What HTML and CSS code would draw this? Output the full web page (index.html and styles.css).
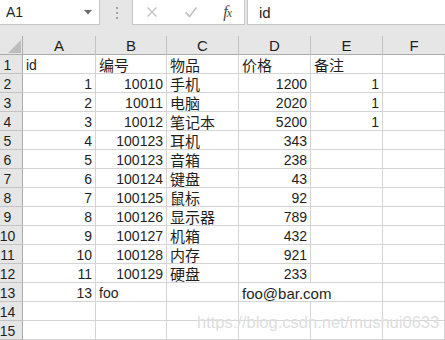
FILE: index.html
```html
<!DOCTYPE html>
<html lang="zh">
<head>
    <meta charset="UTF-8">
    <title>Sheet1</title>
    <link rel="stylesheet" href="styles.css">
</head>
<body>

    <!-- Barre de formule -->
    <div class="toolbar">
        <div class="namebox">
            <span>A1</span>
            <svg class="caret" width="8" height="5" viewBox="0 0 8 5"><path d="M0 0H8L4 4.5Z" fill="#6d6d6d"/></svg>
        </div>
        <div class="grip"><i></i><i></i><i></i></div>
        <div class="fx-buttons">
            <svg width="12" height="12" viewBox="0 0 12 12"><path d="M1.5 1.5L10.5 10.5M10.5 1.5L1.5 10.5" stroke="#c4c4c4" stroke-width="1.4"/></svg>
            <svg width="14" height="12" viewBox="0 0 14 12"><path d="M1.5 6.5L5.5 10.5L12.5 1.5" stroke="#c4c4c4" stroke-width="1.8" fill="none"/></svg>
            <span class="fx">f<small>x</small></span>
        </div>
        <div class="formula">id</div>
    </div>

    <!-- Feuille -->
    <div class="sheet">
        <div class="corner"><svg width="13" height="13" viewBox="0 0 13 13"><path d="M13 0V13H0Z" fill="#bcbcbc"/></svg></div>
        <div class="ch">A</div><div class="ch">B</div><div class="ch">C</div><div class="ch">D</div><div class="ch">E</div><div class="ch last">F</div>

        <div class="rh">1</div><div class="c">id</div><div class="c zh">编号</div><div class="c zh">物品</div><div class="c zh">价格</div><div class="c zh">备注</div><div class="c"></div>
        <div class="rh">2</div><div class="c n">1</div><div class="c n">10010</div><div class="c zh">手机</div><div class="c n">1200</div><div class="c n">1</div><div class="c"></div>
        <div class="rh">3</div><div class="c n">2</div><div class="c n">10011</div><div class="c zh">电脑</div><div class="c n">2020</div><div class="c n">1</div><div class="c"></div>
        <div class="rh">4</div><div class="c n">3</div><div class="c n">10012</div><div class="c zh">笔记本</div><div class="c n">5200</div><div class="c n">1</div><div class="c"></div>
        <div class="rh">5</div><div class="c n">4</div><div class="c n">100123</div><div class="c zh">耳机</div><div class="c n">343</div><div class="c"></div><div class="c"></div>
        <div class="rh">6</div><div class="c n">5</div><div class="c n">100123</div><div class="c zh">音箱</div><div class="c n">238</div><div class="c"></div><div class="c"></div>
        <div class="rh">7</div><div class="c n">6</div><div class="c n">100124</div><div class="c zh">键盘</div><div class="c n">43</div><div class="c"></div><div class="c"></div>
        <div class="rh">8</div><div class="c n">7</div><div class="c n">100125</div><div class="c zh">鼠标</div><div class="c n">92</div><div class="c"></div><div class="c"></div>
        <div class="rh">9</div><div class="c n">8</div><div class="c n">100126</div><div class="c zh">显示器</div><div class="c n">789</div><div class="c"></div><div class="c"></div>
        <div class="rh">10</div><div class="c n">9</div><div class="c n">100127</div><div class="c zh">机箱</div><div class="c n">432</div><div class="c"></div><div class="c"></div>
        <div class="rh">11</div><div class="c n">10</div><div class="c n">100128</div><div class="c zh">内存</div><div class="c n">921</div><div class="c"></div><div class="c"></div>
        <div class="rh">12</div><div class="c n">11</div><div class="c n">100129</div><div class="c zh">硬盘</div><div class="c n">233</div><div class="c"></div><div class="c"></div>
        <div class="rh">13</div><div class="c n">13</div><div class="c">foo</div><div class="c"></div><div class="c spill">foo@bar.com</div><div class="c"></div><div class="c"></div>
        <div class="rh">14</div><div class="c"></div><div class="c"></div><div class="c"></div><div class="c"></div><div class="c"></div><div class="c"></div>
        <div class="rh">15</div><div class="c"></div><div class="c"></div><div class="c"></div><div class="c"></div><div class="c"></div><div class="c"></div>
    </div>

    <div class="watermark">https://blog.csdn.net/mushui0633</div>

</body>
</html>
```

FILE: styles.css
```css
/* Page */
body {
    margin: 0;
    width: 445px;
    height: 340px;
    overflow: hidden;
    background-color: #e6e6e6;
    font-family: 'Liberation Sans', 'Noto Sans CJK SC', sans-serif;
    color: #1e1e1e;
    position: relative;
}

/* Barre de formule */
.toolbar {
    display: flex;
    height: 25px;
    gap: 2px;
}

.namebox {
    width: 100px;
    box-sizing: border-box;
    background-color: white;
    border-right: 1px solid #c6c6c6;
    border-bottom: 1px solid #c6c6c6;
    display: flex;
    align-items: center;
    justify-content: space-between;
    padding: 0 7px 0 6px;
    font-size: 14px;
}

.caret {
    margin-top: 1px;
}

.grip {
    width: 27px;
    display: flex;
    flex-direction: column;
    align-items: center;
    justify-content: center;
    gap: 3px;
    margin-left: 1px;
}

.grip i {
    width: 2px;
    height: 2px;
    background-color: #a3a3a3;
}

.fx-buttons {
    width: 113px;
    box-sizing: border-box;
    background-color: white;
    border: 1px solid #c6c6c6;
    border-top: none;
    display: flex;
    align-items: center;
    padding: 0 13px 0 13px;
    justify-content: space-between;
}

.fx {
    font-family: 'Liberation Serif', serif;
    font-style: italic;
    font-size: 16px;
    color: #4a4a4a;
    letter-spacing: -1px;
}

.fx small {
    font-size: 12px;
}

.formula {
    flex: 1;
    background-color: white;
    border-left: 1px solid #c6c6c6;
    border-bottom: 1px solid #c6c6c6;
    display: flex;
    align-items: center;
    padding-left: 11px;
    font-size: 15px;
}

/* Grille */
.sheet {
    margin-top: 11px;
    display: grid;
    grid-template-columns: 23px 73px 71px 72px 72px 72px 1fr;
    grid-auto-rows: 19px;
    background-color: white;
}

.sheet > div {
    box-sizing: border-box;
}

.corner {
    background-color: #e6e6e6;
    border-right: 1px solid #ababab;
    border-bottom: 1px solid #ababab;
    display: flex;
    align-items: flex-end;
    justify-content: flex-end;
    padding: 0 1px 1px 0;
}

.ch {
    background-color: #e6e6e6;
    border-right: 1px solid #c3c3c3;
    border-bottom: 1px solid #ababab;
    display: flex;
    align-items: flex-end;
    justify-content: center;
    font-size: 15px;
    line-height: 16px;
}

.ch.last {
    border-right: none;
}

.rh {
    background-color: #e6e6e6;
    border-right: 1px solid #ababab;
    border-bottom: 1px solid #c3c3c3;
    display: flex;
    align-items: flex-end;
    justify-content: center;
    padding-right: 7px;
    font-size: 14px;
    line-height: 15px;
    white-space: nowrap;
}

.c {
    border-right: 1px solid #d4d4d4;
    border-bottom: 1px solid #d4d4d4;
    display: flex;
    align-items: flex-end;
    padding: 0 3px;
    font-size: 14px;
    line-height: 15px;
    white-space: nowrap;
    overflow: hidden;
}

.c.n {
    justify-content: flex-end;
    padding-right: 3px;
}

.c.zh {
    font-size: 15px;
}

.c.spill {
    border-right: none;
    overflow: visible;
    font-size: 15px;
}

/* Filigrane */
.watermark {
    position: absolute;
    left: 197px;
    top: 313px;
    font-size: 16.5px;
    color: rgba(205, 205, 205, 0.7);
    text-shadow: 0 0 1px #fff;
    white-space: nowrap;
}
```
